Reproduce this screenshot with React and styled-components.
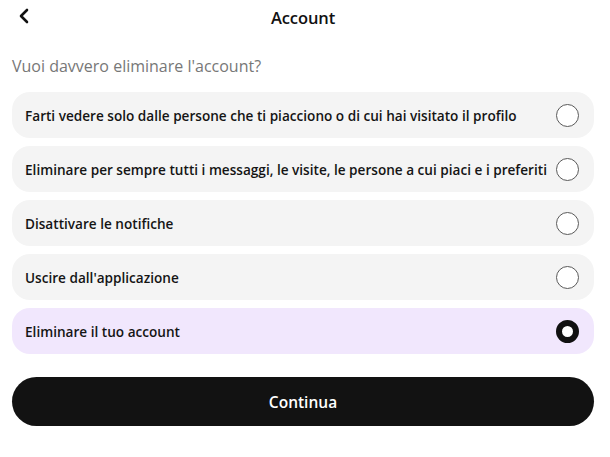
import React, { useState } from "react";
import styled, { createGlobalStyle } from "styled-components";

const Global = createGlobalStyle`
  html, body { margin: 0; padding: 0; background: #fff; }
  body { font-family: "Open Sans", "Noto Sans", sans-serif; color: #111; }
  * { box-sizing: border-box; }
`;

const Page = styled.div`
  width: 610px;
  padding: 0 16px 0 12px;
  display: flex;
  flex-direction: column;
`;

const Header = styled.header`
  height: 35px;
  display: flex;
  align-items: center;
  justify-content: center;
  position: relative;
`;

const BackButton = styled.button`
  position: absolute;
  left: 1px;
  top: 5px;
  width: 22px;
  height: 22px;
  padding: 0;
  border: none;
  background: none;
  display: flex;
  align-items: center;
  justify-content: center;
  cursor: pointer;
`;

const Title = styled.h1`
  margin: 0;
  font-size: 16.5px;
  font-weight: 600;
  color: #111;
  letter-spacing: -0.1px;
`;

const Question = styled.p`
  margin: 20px 0 14px;
  font-size: 16px;
  line-height: 23px;
  color: #777;
  font-weight: 400;
`;

const List = styled.div`
  display: flex;
  flex-direction: column;
  gap: 8px;
`;

const Option = styled.label`
  height: 46px;
  border-radius: 18px;
  background: ${(p) => (p.$selected ? "#f1e7fd" : "#f4f4f4")};
  display: flex;
  align-items: center;
  justify-content: space-between;
  gap: 8px;
  padding: 0 15px 0 13px;
  cursor: pointer;
`;

const OptionText = styled.span`
  font-size: 13.6px;
  font-weight: 600;
  color: #151515;
  white-space: nowrap;
`;

const Radio = styled.span`
  width: 23px;
  height: 23px;
  flex: none;
  border-radius: 50%;
  border: ${(p) => (p.$checked ? "6.5px solid #111" : "1.5px solid #5a5a5a")};
  background: #fff;
`;

const ContinueButton = styled.button`
  margin-top: 23px;
  height: 49px;
  border: none;
  border-radius: 25px;
  background: #121212;
  color: #fff;
  font-family: inherit;
  font-size: 15.5px;
  font-weight: 600;
  cursor: pointer;
`;

const options = [
  "Farti vedere solo dalle persone che ti piacciono o di cui hai visitato il profilo",
  "Eliminare per sempre tutti i messaggi, le visite, le persone a cui piaci e i preferiti",
  "Disattivare le notifiche",
  "Uscire dall'applicazione",
  "Eliminare il tuo account",
];

export default function App() {
  const [selected, setSelected] = useState(4);
  return (
    <>
      <Global />
      <Page>
        <Header>
          <BackButton aria-label="Indietro">
            <svg width="14" height="16" viewBox="0 0 14 16" fill="none">
              <path d="M10 2 L4 8 L10 14" stroke="#111" strokeWidth="2.6" strokeLinecap="round" strokeLinejoin="round" />
            </svg>
          </BackButton>
          <Title>Account</Title>
        </Header>
        <Question>Vuoi davvero eliminare l'account?</Question>
        <List>
          {options.map((o, i) => (
            <Option key={i} $selected={selected === i} onClick={() => setSelected(i)}>
              <OptionText>{o}</OptionText>
              <Radio $checked={selected === i} />
            </Option>
          ))}
        </List>
        <ContinueButton>Continua</ContinueButton>
      </Page>
    </>
  );
}
